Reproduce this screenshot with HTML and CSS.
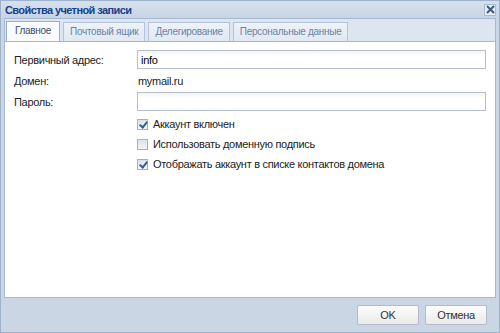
FILE: index.html
```html
<!DOCTYPE html>
<html lang="ru">
<head>
  <meta charset="UTF-8">
  <title>Свойства учетной записи</title>
  <link rel="stylesheet" href="styles.css">
</head>
<body>
  <div class="dialog">
    <div class="dialog-header">
      <span class="dialog-title">Свойства учетной записи</span>
      <span class="close-btn">
        <svg width="9" height="9" viewBox="0 0 9 9"><path d="M1 1 L8 8 M8 1 L1 8" stroke="#3b5a82" stroke-width="2"/></svg>
      </span>
    </div>

    <div class="tab-strip">
      <div class="tab active">Главное</div>
      <div class="tab">Почтовый ящик</div>
      <div class="tab">Делегирование</div>
      <div class="tab">Персональные данные</div>
    </div>

    <div class="panel">
      <div class="form-row">
        <label class="field-label">Первичный адрес:</label>
        <div class="field"><input class="text-input" type="text" value="info"></div>
      </div>
      <div class="form-row">
        <span class="field-label">Домен:</span>
        <span class="field-value">mymail.ru</span>
      </div>
      <div class="form-row">
        <label class="field-label">Пароль:</label>
        <div class="field"><input class="text-input" type="password"></div>
      </div>

      <div class="checks">
        <label class="check"><span class="box checked"></span>Аккаунт включен</label>
        <label class="check"><span class="box"></span>Использовать доменную подпись</label>
        <label class="check"><span class="box checked"></span>Отображать аккаунт в списке контактов домена</label>
      </div>
    </div>

    <div class="dialog-footer">
      <button class="btn">OK</button>
      <button class="btn">Отмена</button>
    </div>
  </div>
</body>
</html>
```

FILE: styles.css
```css
html, body {
  margin: 0; padding: 0;
  width: 500px; height: 333px;
  overflow: hidden;
  font-family: "Liberation Sans", Arial, sans-serif;
  font-size: 11px;
  letter-spacing: -0.3px;
  color: #222;
}
.dialog {
  height: 333px;
  display: flex;
  flex-direction: column;
  background: #cbd6e4;
  border: 1px solid #9fb2cc;
  box-sizing: border-box;
}
.dialog-header {
  height: 17px;
  display: flex;
  align-items: center;
  justify-content: space-between;
  padding: 0 3px 0 4px;
  background: linear-gradient(#d6e0ed, #c8d4e4);
}
.dialog-title {
  font-weight: bold;
  color: #15428b;
  font-size: 11px;
  letter-spacing: -0.6px;
}
.close-btn {
  width: 12px; height: 12px;
  display: flex;
  align-items: center;
  justify-content: center;
  background: #e8eef6;
  border: 1px solid #a9bbd3;
  box-sizing: border-box;
}
.tab-strip {
  display: flex;
  align-items: flex-end;
  gap: 3px;
  height: 22px;
  padding: 0 3px 0 1px;
  margin: 0 3px;
  background: #dce5f0;
  border: 1px solid #a4b8d2;
  border-bottom: none;
}
.tab {
  height: 18px;
  line-height: 18px;
  padding: 0 6px;
  font-size: 10px;
  color: #6a83a5;
  background: linear-gradient(#eef2f8, #e0e8f2);
  border: 1px solid #b3c4da;
  border-bottom: none;
}
.tab.active {
  color: #3a4f6c;
  background: #f9fbfd;
  border-color: #99afcc;
  height: 19px;
  padding: 0 8px;
}
.panel {
  flex: 1;
  margin: 0 3px;
  background: #fff;
  border: 1px solid #a4b8d2;
  padding: 7px 9px 0 9px;
}
.form-row {
  display: flex;
  align-items: center;
  min-height: 21px;
}
.field-label {
  width: 123px;
  flex: none;
  color: #222;
}
.field { flex: 1; }
.field-value { color: #222; padding-left: 1px; }
.text-input {
  width: 100%;
  height: 19px;
  box-sizing: border-box;
  border: 1px solid #b5c0cc;
  background: linear-gradient(#f3f3f3, #fff 5px);
  font: inherit;
  letter-spacing: inherit;
  padding: 1px 3px;
  outline: none;
}
.checks {
  margin-left: 123px;
  padding-top: 6px;
  display: flex;
  flex-direction: column;
  gap: 8px;
}
.check {
  display: flex;
  align-items: center;
  gap: 5px;
  height: 12px;
}
.box {
  width: 11px; height: 11px;
  box-sizing: border-box;
  border: 1px solid #a6b2c0;
  background: linear-gradient(#dde2e8, #f3f5f7);
  position: relative;
}
.box.checked::after {
  content: "";
  position: absolute;
  left: 3px; top: 0px;
  width: 3px; height: 6px;
  border: solid #3a5a95;
  border-width: 0 2px 2px 0;
  transform: rotate(40deg);
}
.dialog-footer {
  height: 34px;
  display: flex;
  justify-content: flex-end;
  align-items: center;
  gap: 6px;
  padding-right: 12px;
}
.btn {
  width: 62px;
  height: 20px;
  font: inherit;
  letter-spacing: inherit;
  color: #333;
  background: linear-gradient(#fdfdfd, #eaeaea);
  border: 1px solid #b3bcc7;
  border-radius: 2px;
}
```
